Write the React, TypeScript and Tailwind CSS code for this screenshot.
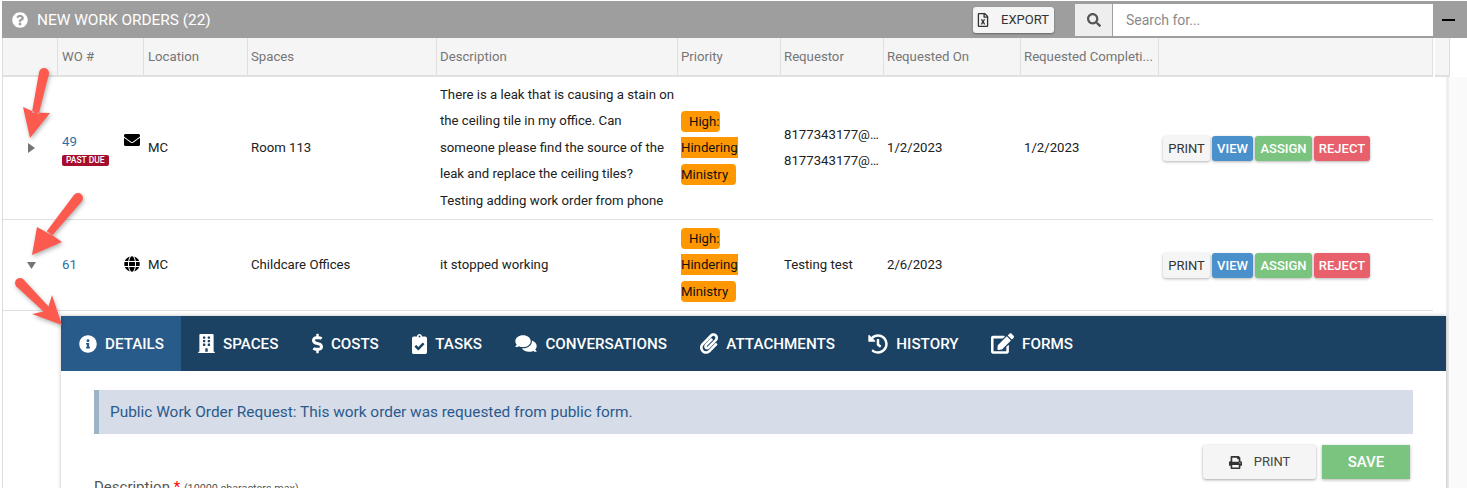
import {
  FaBuilding,
  FaClipboardCheck,
  FaComments,
  FaDollarSign,
  FaEdit,
  FaEnvelope,
  FaGlobe,
  FaHistory,
  FaInfoCircle,
  FaPaperclip,
  FaPrint,
  FaQuestionCircle,
  FaRegFileExcel,
  FaSearch,
} from "react-icons/fa";
import type { IconType } from "react-icons";

const gridCols =
  "grid grid-cols-[55px_86px_104px_189px_241px_103px_103px_137px_138px_274px]";

const columns = [
  "",
  "WO #",
  "Location",
  "Spaces",
  "Description",
  "Priority",
  "Requestor",
  "Requested On",
  "Requested Completi...",
  "",
];

const tabs: { label: string; icon: IconType; size: string; active?: boolean }[] = [
  { label: "DETAILS", icon: FaInfoCircle, size: "w-[18px] h-[18px]", active: true },
  { label: "SPACES", icon: FaBuilding, size: "w-[17px] h-[19px]" },
  { label: "COSTS", icon: FaDollarSign, size: "w-[11px] h-[21px]" },
  { label: "TASKS", icon: FaClipboardCheck, size: "w-[15px] h-[20px]" },
  { label: "CONVERSATIONS", icon: FaComments, size: "w-[24px] h-[19px] -ml-[1px] -mr-[1px]" },
  { label: "ATTACHMENTS", icon: FaPaperclip, size: "w-[18px] h-[21px]" },
  { label: "HISTORY", icon: FaHistory, size: "w-[20px] h-[20px]" },
  { label: "FORMS", icon: FaEdit, size: "w-[23px] h-[21px] -ml-[1px]" },
];

function Arrow({
  tail,
  tip,
  wingA,
  wingB,
}: {
  tail: [number, number];
  tip: [number, number];
  wingA: [number, number];
  wingB: [number, number];
}) {
  const dx = tip[0] - tail[0];
  const dy = tip[1] - tail[1];
  const len = Math.hypot(dx, dy);
  const nx = -dy / len;
  const ny = dx / len;
  const base: [number, number] = [tail[0] + dx * 0.62, tail[1] + dy * 0.62];
  const points = [
    [tail[0] + nx * 5, tail[1] + ny * 5],
    [base[0] + nx * 3.5, base[1] + ny * 3.5],
    wingA,
    tip,
    wingB,
    [base[0] - nx * 3.5, base[1] - ny * 3.5],
    [tail[0] - nx * 5, tail[1] - ny * 5],
  ]
    .map((p) => p.join(","))
    .join(" ");

  return (
    <>
      <circle cx={tail[0]} cy={tail[1]} r="5" fill="#fc5a4e" />
      <polygon points={points} fill="#fc5a4e" />
    </>
  );
}

function ActionButtons() {
  return (
    <div className="flex gap-[2px] pl-[4px] text-[13px] font-medium leading-[25px]">
      <button className="w-[47px] h-[25px] rounded-[3px] bg-[#f5f5f5] text-[#333] font-normal shadow-[0_1px_3px_rgba(0,0,0,0.3)]">
        PRINT
      </button>
      <button className="w-[41px] h-[25px] rounded-[3px] bg-[#4a90cb] text-white shadow-[0_1px_3px_rgba(0,0,0,0.3)]">
        VIEW
      </button>
      <button className="w-[57px] h-[25px] rounded-[3px] bg-[#7bc47f] text-white shadow-[0_1px_3px_rgba(0,0,0,0.3)]">
        ASSIGN
      </button>
      <button className="w-[56px] h-[25px] rounded-[3px] bg-[#e8606c] text-white shadow-[0_1px_3px_rgba(0,0,0,0.3)]">
        REJECT
      </button>
    </div>
  );
}

function PriorityTag() {
  return (
    <div className="pl-[3px] mt-[1px] w-[68px] leading-[26.5px] text-[#111]">
      <span className="bg-[#ff9800] rounded-[4px] py-[3px] pr-[1px] pl-[8px]">
        High:
      </span>{" "}
      <span className="bg-[#ff9800] py-[3px]">Hindering</span>{" "}
      <span className="bg-[#ff9800] rounded-[4px] py-[3px] pr-[8px]">
        Ministry
      </span>
    </div>
  );
}

function Triangle({ down }: { down?: boolean }) {
  return (
    <div className="pl-[24px] flex items-center">
      <svg width="9" height="10" viewBox="0 0 9 10">
        <polygon
          points={down ? "0,2 9,2 4.5,9" : "1,0 8,5 1,10"}
          fill="#757575"
        />
      </svg>
    </div>
  );
}

export default function App() {
  return (
    <div className="relative w-[1467px] h-[488px] overflow-hidden bg-white pt-px pl-[2px] font-['Roboto',sans-serif] text-[13.2px] text-[#212121]">
      {/* title bar */}
      <div className="flex items-center h-[37px] bg-[#9e9e9e] text-white">
        <FaQuestionCircle className="ml-[10px] text-[16px]" />
        <span className="ml-[9px] pt-[2px] w-[174px] text-[15.4px] leading-none whitespace-nowrap">
          NEW WORK ORDERS (22)
        </span>
        <button className="ml-[762px] flex items-center w-[81px] h-[26px] bg-[#f5f5f5] rounded-[3px] text-[#333] shadow-[0_1px_2px_rgba(0,0,0,0.35)]">
          <FaRegFileExcel className="ml-[3px] text-[14px]" />
          <span className="ml-[11px] text-[13px]">EXPORT</span>
        </button>
        <div className="ml-[21px] flex h-[32px]">
          <div className="flex items-center justify-center w-[37px] bg-[#eeeeee] text-[#555]">
            <FaSearch className="text-[14px]" />
          </div>
          <div className="w-[320px] ml-px bg-white pl-[13px] pt-[2px] flex items-center text-[14px] text-[#8a8a8a]">
            Search for...
          </div>
        </div>
        <div className="ml-[9px] w-[13px] h-[2px] bg-black" />
      </div>

      {/* column headers */}
      <div className="flex h-[39px] border-l border-[#dddddd]">
        <div
          className={`${gridCols} w-[1430px] bg-[#f5f5f5] border-b-2 border-[#e0e0e0] text-[#757575]`}
        >
          {columns.map((c, i) => (
            <div
              key={i}
              className={`flex items-center border-r border-[#e0e0e0] whitespace-nowrap overflow-hidden ${
                i === 1 || i === 2 ? "pl-[4px]" : "pl-[3px]"
              }`}
            >
              {c}
            </div>
          ))}
        </div>
        <div className="w-[2px] bg-white" />
        <div className="w-[14px] bg-[#f5f5f5] border-b-2 border-[#e0e0e0]" />
        <div className="w-px bg-[#dddddd]" />
      </div>

      {/* table body */}
      <div className="flex h-[411px]">
        <div className="w-[1447px] border-l border-r-[3px] border-l-[#dddddd] border-r-[#efefef]">
          <div
            className={`${gridCols} w-[1430px] h-[143px] items-center border-b border-[#e0e0e0]`}
          >
            <Triangle />
            <div className="flex items-center justify-between pl-[4px] pr-[4px]">
              <div className="flex flex-col items-start">
                <a className="text-[#2f6ea8] leading-[15px] mt-[3px]">49</a>
                <span className="mt-[6px] px-[4px] w-[47px] h-[11px] rounded-[2px] bg-[#a50e2d] text-white text-[8.5px] font-medium leading-[11px] whitespace-nowrap">
                  PAST DUE
                </span>
              </div>
              <FaEnvelope className="text-[16px] text-black mb-[16px]" />
            </div>
            <div className="pl-[4px]">MC</div>
            <div className="pl-[3px]">Room 113</div>
            <div className="pl-[3px] pr-[2px] leading-[26.5px]">
              There is a leak that is causing a stain on the ceiling tile in my
              office. Can someone please find the source of the leak and replace
              the ceiling tiles? Testing adding work order from phone
            </div>
            <PriorityTag />
            <div className="pl-[3px] leading-[26px]">
              <div className="truncate">8177343177@gmail.com</div>
              <div className="truncate">8177343177@gmail.com</div>
            </div>
            <div className="pl-[3px]">1/2/2023</div>
            <div className="pl-[3px]">1/2/2023</div>
            <ActionButtons />
          </div>

          <div
            className={`${gridCols} w-[1430px] h-[91px] items-center border-b border-[#e0e0e0]`}
          >
            <Triangle down />
            <div className="flex items-center justify-between pl-[4px] pr-[4px]">
              <a className="text-[#2f6ea8]">61</a>
              <FaGlobe className="text-[16px] text-black mb-[2px]" />
            </div>
            <div className="pl-[4px]">MC</div>
            <div className="pl-[3px]">Childcare Offices</div>
            <div className="pl-[3px]">it stopped working</div>
            <PriorityTag />
            <div className="pl-[3px]">Testing test</div>
            <div className="pl-[3px]">2/6/2023</div>
            <div />
            <ActionButtons />
          </div>

          {/* expanded detail panel */}
          <div className="pt-[5px] pl-[58px]">
            <div className="w-[1385px] h-[300px] bg-white shadow-[0_0_4px_rgba(0,0,0,0.25)]">
              <div className="flex h-[55px] bg-[#1b4263] text-white">
                {tabs.map(({ label, icon: Icon, size, active }) => (
                  <div
                    key={label}
                    className={`flex items-center gap-[8px] text-[15.2px] font-medium ${
                      active
                        ? "bg-[#295b8a] pl-[18px] pr-[17px]"
                        : "pl-[17px] pr-[16.5px]"
                    }`}
                  >
                    <Icon className={size} />
                    <span className="pt-[2px]">{label}</span>
                  </div>
                ))}
              </div>
              <div className="px-[33px] pt-[19px]">
                <div className="flex items-center h-[44px] pt-[2px] w-[1319px] bg-[#d6dce8] border-l-[5px] border-[#9db4c6] pl-[11px] text-[15.4px] text-[#2a5a8c]">
                  Public Work Order Request: This work order was requested from
                  public form.
                </div>
                <div className="flex justify-end gap-[6px] mt-[11px] pr-[3px]">
                  <button className="flex items-center justify-center gap-[12px] w-[113px] h-[34px] rounded-[3px] bg-[#f5f5f5] text-[#444] shadow-[0_1px_3px_rgba(0,0,0,0.35)]">
                    <FaPrint className="text-[13px] text-[#333]" />
                    <span className="text-[13px]">PRINT</span>
                  </button>
                  <button className="w-[88px] h-[34px] bg-[#7bc47f] text-white text-[15px] font-medium shadow-[0_1px_3px_rgba(0,0,0,0.3)]">
                    SAVE
                  </button>
                </div>
                <div className="-mt-[1px] text-[15px] text-[#555] leading-[18px]">
                  Description <span className="text-[#ff0000]">*</span>{" "}
                  <span className="text-[10.8px]">(10000 characters max)</span>
                </div>
              </div>
            </div>
          </div>
        </div>
        <div className="flex-1 bg-[#fafafa]" />
      </div>

      {/* annotation arrows */}
      <svg
        className="absolute left-0 top-0 pointer-events-none drop-shadow-[1px_2px_2px_rgba(0,0,0,0.3)]"
        width="1467"
        height="488"
      >
        <Arrow tail={[44, 73]} tip={[30, 138]} wingA={[50, 113]} wingB={[23, 107]} />
        <Arrow tail={[78, 198]} tip={[32, 255]} wingA={[62, 242]} wingB={[37, 227]} />
        <Arrow tail={[20, 283]} tip={[62, 325]} wingA={[32, 314]} wingB={[52, 295]} />
      </svg>
    </div>
  );
}
